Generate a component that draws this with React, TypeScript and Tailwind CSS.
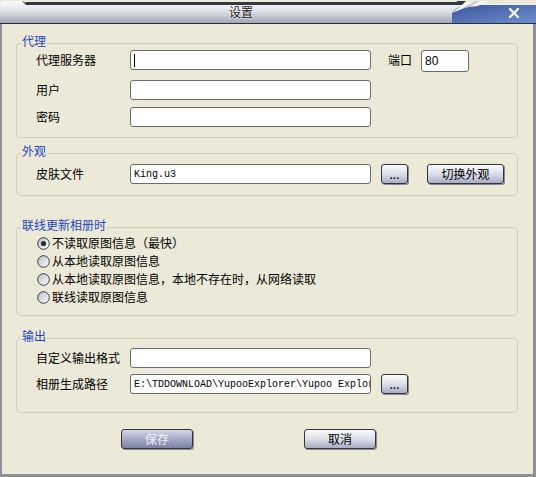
import React from "react";

type InputProps = {
  value?: string;
  caret?: boolean;
  mono?: boolean;
  className?: string;
};

// Rounded white edit box, skinned like the rest of the dialog
const TextBox: React.FC<InputProps> = ({ value, caret, mono, className = "w-[241px] h-5" }) => (
  <div
    className={`${className} bg-white border border-[#6b6b6b] rounded-[3px] flex items-center pl-[3px] overflow-hidden whitespace-nowrap text-black ${
      mono ? "font-['Liberation_Mono',monospace] text-[10px]" : "font-['Liberation_Sans',sans-serif] text-[12px]"
    }`}
  >
    {caret && <span className="w-px h-[13px] bg-black" />}
    {value}
  </div>
);

const SkinButton: React.FC<{ label: string; className?: string; primary?: boolean }> = ({
  label,
  className = "w-[72px]",
  primary,
}) => (
  <div
    className={`${className} h-5 rounded-[3px] border border-[#33343e] shadow-[1px_1px_0_#8c8c8c] flex items-center justify-center text-[12px] leading-none ${
      primary
        ? "bg-gradient-to-b from-[#d4d7e6] via-[#a4a9c6] to-[#7c82a6] text-[#eef0f6]"
        : "bg-gradient-to-b from-[#fbfbfd] via-[#dcdee8] to-[#a9adc4] text-black"
    }`}
  >
    {label}
  </div>
);

const Group: React.FC<{ title: string; className?: string; children: React.ReactNode }> = ({
  title,
  className = "",
  children,
}) => (
  <fieldset className={`ml-[14px] w-[502px] border border-[#d0cebd] rounded-[4px] ${className}`}>
    <legend className="ml-[4px] px-[1px] pb-[4px] text-[12px] leading-[14px] text-[#1c46c2]">{title}</legend>
    {children}
  </fieldset>
);

const Radio: React.FC<{ checked?: boolean; label: string }> = ({ checked, label }) => (
  <div className="h-[18px] flex items-center pl-[20px] gap-[2px]">
    <svg width="13" height="13" viewBox="0 0 13 13">
      <defs>
        <linearGradient id="rb" x1="0" y1="0" x2="1" y2="1">
          <stop offset="0" stopColor="#b9bcc6" />
          <stop offset="1" stopColor="#ffffff" />
        </linearGradient>
      </defs>
      <circle cx="6.5" cy="6.5" r="5.8" fill="url(#rb)" stroke="#3a3d48" strokeWidth="1" />
      {checked && <circle cx="6.5" cy="6.5" r="2.6" fill="#2b2d36" />}
    </svg>
    <span className="text-[12px] leading-none">{label}</span>
  </div>
);

function TitleBar() {
  return (
    <div className="relative h-[24px] w-[536px] flex">
      <svg className="absolute inset-0" width="536" height="24" viewBox="0 0 536 24">
        <defs>
          <linearGradient id="silver" x1="0" y1="0" x2="0" y2="1">
            <stop offset="0" stopColor="#fbfbfc" />
            <stop offset="0.45" stopColor="#e2e3e9" />
            <stop offset="1" stopColor="#a2a6b6" />
          </linearGradient>
          <linearGradient id="blue" x1="0" y1="0" x2="1" y2="1">
            <stop offset="0" stopColor="#3a579c" />
            <stop offset="1" stopColor="#6f8dcc" />
          </linearGradient>
        </defs>
        <rect x="0" y="0" width="536" height="24" fill="#ece9d8" />
        <path d="M0 23 V6 Q0 1 5 1 H18 Q23 1 26 4 H536 V23 Z" fill="url(#silver)" />
        <path d="M22 1 Q25 2 27 4 H452 L458 1 H466 L462 5 H26 Z" fill="#343846" />
        <rect x="26" y="2" width="430" height="3" fill="#343846" />
        {/* blue caption block with the notched tab */}
        <path d="M452 23 V13 Q456 7 466 5 H536 V23 Z" fill="url(#blue)" />
        <path d="M452 13 L467 1 H475 L462 9 Z" fill="#f4f5f8" />
        <path d="M462 9 L475 1 H480 L469 7 Z" fill="#c9ccd6" />
        <path d="M469 7 L480 1 H488 L478 6 Z" fill="#f4f5f8" />
        {/* close cross */}
        <path d="M510 9 L518 17 M518 9 L510 17" stroke="#ffffff" strokeWidth="2.2" strokeLinecap="round" />
        <rect x="0" y="23" width="536" height="1" fill="#2c2f3a" />
      </svg>
      <div className="relative w-[482px] h-[23px] flex items-center justify-center text-[12px] text-[#1d1d22] [text-shadow:0_0_2px_#ffffff]">
        设置
      </div>
    </div>
  );
}

export default function App() {
  return (
    <div className="w-[536px] h-[477px] font-['Noto_Sans_CJK_SC',sans-serif] text-black">
      <TitleBar />
      <div className="h-[453px] bg-[#ece9d8] border-l-2 border-r-[3px] border-b-[3px] border-[#8e909c] flex flex-col">
        <Group title="代理" className="mt-[10px] pb-[10px]">
          <div className="-mt-[2px] flex flex-col pl-[19px] text-[12px]">
            <div className="flex items-start h-[22px]">
              <span className="w-[94px] leading-[20px]">代理服务器</span>
              <TextBox caret />
              <span className="ml-[17px] w-[33px] leading-[20px]">端口</span>
              <TextBox value="80" className="w-[48px] h-[22px]" />
            </div>
            <div className="flex items-center mt-[8px]">
              <span className="w-[94px]">用户</span>
              <TextBox />
            </div>
            <div className="flex items-center mt-[7px]">
              <span className="w-[94px]">密码</span>
              <TextBox />
            </div>
          </div>
        </Group>

        <Group title="外观" className="mt-[6px] pb-[11px]">
          <div className="pt-[2px] flex items-center pl-[19px] text-[12px]">
            <span className="w-[94px]">皮肤文件</span>
            <TextBox value="King.u3" mono />
            <SkinButton label="..." className="ml-[10px] w-[27px]" />
            <SkinButton label="切换外观" className="ml-[19px] w-[77px]" />
          </div>
        </Group>

        <Group title="联线更新相册时" className="mt-[22px] pb-[9px]">
          <div className="-mt-[2px] flex flex-col">
            <Radio checked label="不读取原图信息（最快）" />
            <Radio label="从本地读取原图信息" />
            <Radio label="从本地读取原图信息，本地不存在时，从网络读取" />
            <Radio label="联线读取原图信息" />
          </div>
        </Group>

        <Group title="输出" className="mt-[13px] pb-[18px]">
          <div className="mt-[1px] flex flex-col pl-[19px] text-[12px]">
            <div className="flex items-center">
              <span className="w-[94px]">自定义输出格式</span>
              <TextBox />
            </div>
            <div className="flex items-center mt-[6px]">
              <span className="w-[94px]">相册生成路径</span>
              <TextBox value={"E:\\TDDOWNLOAD\\YupooExplorer\\Yupoo Explor"} mono />
              <SkinButton label="..." className="ml-[10px] w-[27px]" />
            </div>
          </div>
        </Group>

        <div className="mt-[16px] flex pl-[119px] gap-[111px]">
          <SkinButton label="保存" primary />
          <SkinButton label="取消" />
        </div>
      </div>
    </div>
  );
}
